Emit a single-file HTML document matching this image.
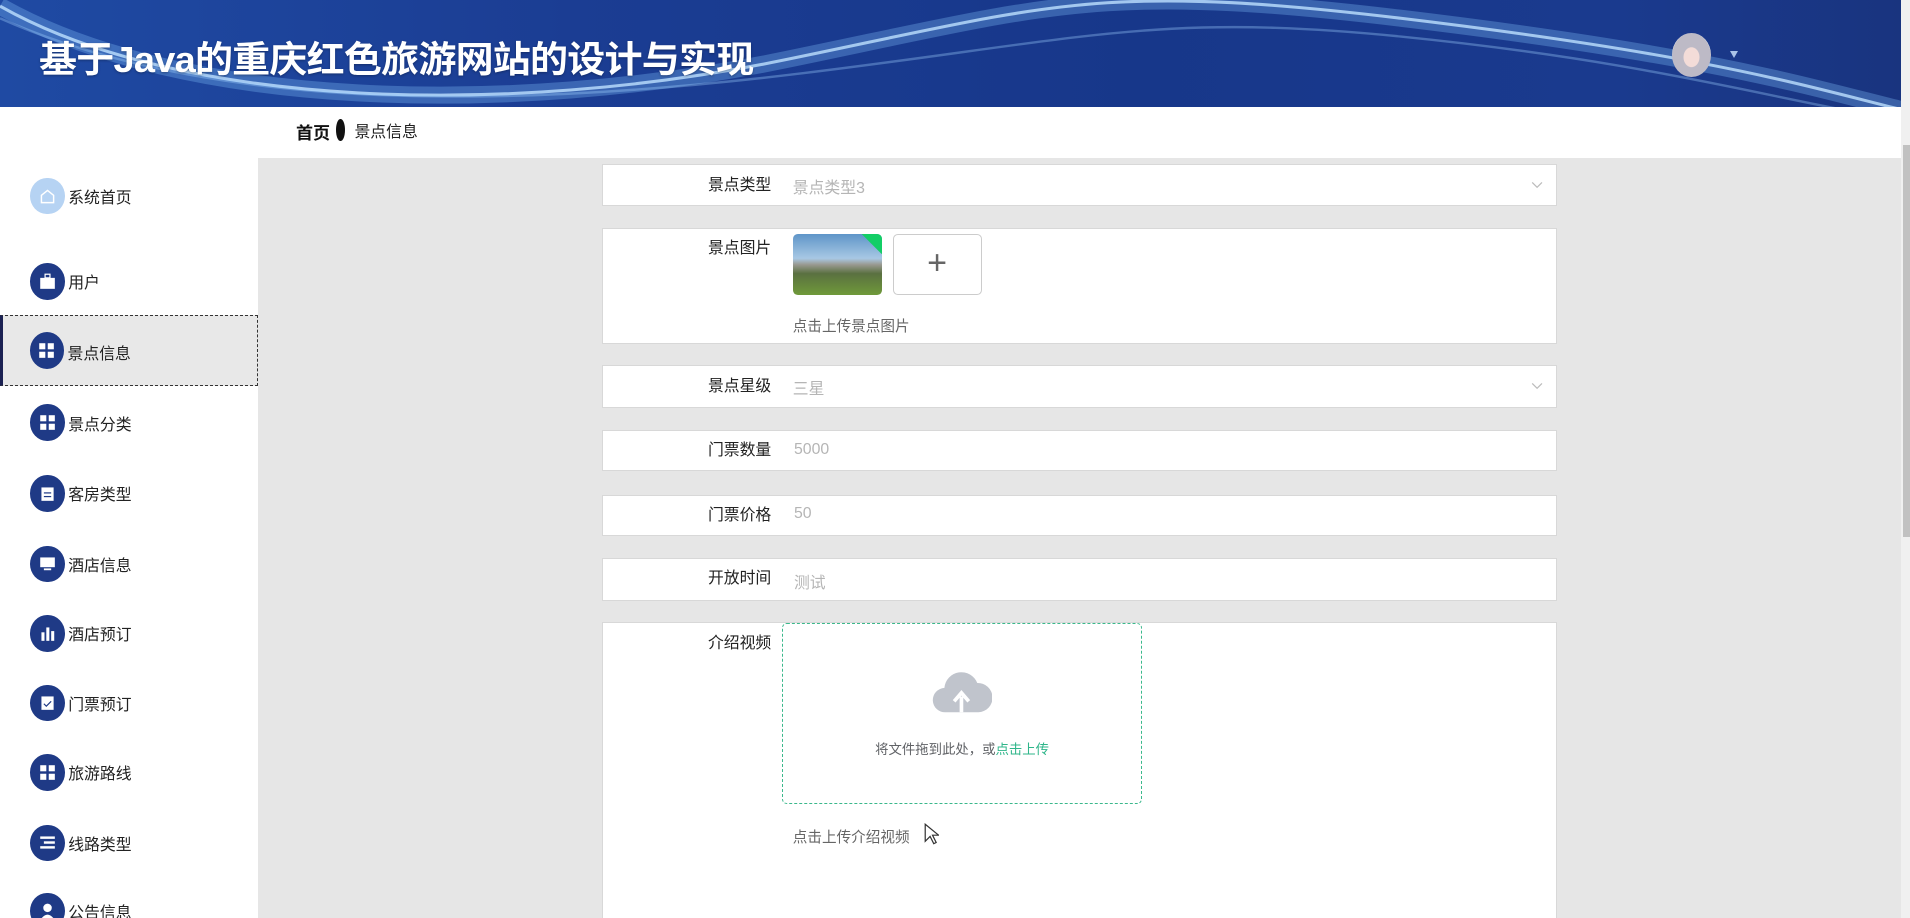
<!DOCTYPE html>
<html><head><meta charset="utf-8">
<style>
html{zoom:1.21811;background:#e6e6e6;overflow:hidden;height:754px}
*{box-sizing:border-box;margin:0;padding:0}
body{width:1568px;height:754px;overflow:hidden;position:relative;background:#e6e6e6;font-family:"Liberation Sans","Noto Sans CJK SC",sans-serif;font-size:13px;color:#333}
.hdr{position:absolute;left:0;top:0;width:1561px;height:88px;overflow:hidden;
background:linear-gradient(90deg,#1f4aa3 0%,#1b3d93 30%,#17378a 60%,#1a3a8e 85%,#19347f 100%)}
.hdr svg{position:absolute;left:0;top:0}
.title{position:absolute;left:32px;top:25px;color:#fff;font-size:30px;font-weight:bold;letter-spacing:-0.6px;text-shadow:0 1px 2px rgba(0,0,0,.3);transform:scaleX(1.04);transform-origin:left}
.av{position:absolute;left:1373px;top:27px;width:32px;height:36px;border-radius:50%;background:radial-gradient(ellipse at 50% 55%,#f3dcd8 0 28%,#bdbac6 30% 70%,#eee 72%)}
.caret{position:absolute;left:1420px;top:42px;width:0;height:0;border-left:4px solid transparent;border-right:4px solid transparent;border-top:6px solid #aac3e8}
.sb{position:absolute;left:1561px;top:0;width:7px;height:754px;background:#f0f0f0}
.sb i{position:absolute;left:1px;top:119px;width:6px;height:322px;background:#c1c1c1}
.side{position:absolute;left:0;top:88px;width:212px;height:666px;background:#fff;overflow:hidden}
.it{position:absolute;left:0;width:212px;height:58px}
.it .c{position:absolute;left:25px;top:14px;width:28px;height:30px;border-radius:50%;background:#1f3a86}
.it .c svg{position:absolute;left:7px;top:8px}
.it span{position:absolute;left:56px;top:20px;font-size:13px;color:#222}
.sel{background:#e8e8e8;border:1px dashed #333;border-left:3px solid #1b2152}
.bc{position:absolute;left:212px;top:88px;width:1349px;height:42px;background:#fff}
.row{position:absolute;left:494px;width:784px;background:#fff;border:1px solid #d8d8d8}
.lab{position:absolute;right:644px;top:5px;font-size:13px;color:#222}
.val{position:absolute;left:156px;top:8px;font-size:13px;color:#b5b5b5}
.arr{position:absolute;right:10px;top:12px}
</style></head><body>
<div class="hdr">
<svg width="1561" height="88">
<path d="M0 5 C150 90 420 95 640 50 S900 -15 1150 15 S1480 70 1561 90" stroke="rgba(120,180,240,.35)" stroke-width="14" fill="none"/>
<path d="M0 5 C150 90 420 95 640 50 S900 -15 1150 15 S1480 70 1561 90" stroke="rgba(190,225,255,.8)" stroke-width="2.5" fill="none"/>
<path d="M0 15 C180 95 430 88 660 60 S950 10 1150 30 S1450 80 1540 95" stroke="rgba(160,210,255,.35)" stroke-width="2" fill="none"/>
</svg>
<div class="title">基于Java的重庆红色旅游网站的设计与实现</div>
<div class="av"></div><div class="caret"></div>
</div>
<div class="sb"><i></i></div>
<div class="side">
<div class="it" style="top:44px"><div class="c" style="background:#b6d3f3"><svg width="14" height="14" viewBox="0 0 14 14"><path d="M2 6L7 2l5 4v6H2z" fill="none" stroke="#fff" stroke-width="1.2"/></svg></div><span>系统首页</span></div>
<div class="it" style="top:114px"><div class="c"><svg width="14" height="14"><rect x="1" y="4" width="12" height="9" fill="#fff"/><rect x="5" y="1" width="4" height="3" fill="none" stroke="#fff"/></svg></div><span>用户</span></div>
<div class="it sel" style="top:171px"><div class="c" style="left:22px;top:13px"><svg width="14" height="14"><rect x="1" y="1" width="5" height="5" fill="#fff"/><rect x="8" y="1" width="5" height="5" fill="#fff"/><rect x="1" y="8" width="5" height="5" fill="#fff"/><rect x="8" y="8" width="5" height="5" fill="#fff"/></svg></div><span style="left:53px;top:20px">景点信息</span></div>
<div class="it" style="top:230px"><div class="c"><svg width="14" height="14"><rect x="1" y="1" width="5" height="5" fill="#fff"/><rect x="8" y="1" width="5" height="5" fill="#fff"/><rect x="1" y="8" width="5" height="5" fill="#fff"/><rect x="8" y="8" width="5" height="5" fill="#fff"/></svg></div><span>景点分类</span></div>
<div class="it" style="top:288px"><div class="c"><svg width="14" height="14"><rect x="2" y="2" width="10" height="11" fill="#fff"/><rect x="4" y="6" width="6" height="1" fill="#1f3a86"/><rect x="4" y="9" width="6" height="1" fill="#1f3a86"/></svg></div><span>客房类型</span></div>
<div class="it" style="top:346px"><div class="c"><svg width="14" height="14"><rect x="1" y="2" width="12" height="8" fill="#fff"/><rect x="4" y="11" width="6" height="1.5" fill="#fff"/></svg></div><span>酒店信息</span></div>
<div class="it" style="top:403px"><div class="c"><svg width="14" height="14"><rect x="2" y="6" width="2.5" height="7" fill="#fff"/><rect x="6" y="2" width="2.5" height="11" fill="#fff"/><rect x="10" y="5" width="2.5" height="8" fill="#fff"/></svg></div><span>酒店预订</span></div>
<div class="it" style="top:460px"><div class="c"><svg width="14" height="14"><rect x="2" y="2" width="10" height="11" fill="#fff"/><path d="M4 8l2 2 4-4" stroke="#1f3a86" fill="none"/></svg></div><span>门票预订</span></div>
<div class="it" style="top:517px"><div class="c"><svg width="14" height="14"><rect x="1" y="1" width="5" height="5" fill="#fff"/><rect x="8" y="1" width="5" height="5" fill="#fff"/><rect x="1" y="8" width="5" height="5" fill="#fff"/><rect x="8" y="8" width="5" height="5" fill="#fff"/></svg></div><span>旅游路线</span></div>
<div class="it" style="top:575px"><div class="c"><svg width="14" height="14"><rect x="1" y="2" width="12" height="2" fill="#fff"/><rect x="4" y="6" width="9" height="2" fill="#fff"/><rect x="1" y="10" width="12" height="2" fill="#fff"/></svg></div><span>线路类型</span></div>
<div class="it" style="top:631px"><div class="c"><svg width="14" height="14"><circle cx="7" cy="4" r="3.5" fill="#fff"/><path d="M1 14 Q7 5 13 14z" fill="#fff"/></svg></div><span>公告信息</span></div>
</div>
<div class="bc"><b style="position:absolute;left:31px;top:10px;font-size:14px;color:#111">首页</b><i style="position:absolute;left:64px;top:10px;width:7px;height:18px;border-radius:50%;background:#111"></i><span style="position:absolute;left:79px;top:10px;font-size:13px;color:#222">景点信息</span></div>

<div class="row" style="top:135px;height:34px"><div class="lab">景点类型</div><div class="val">景点类型3</div><svg class="arr" width="10" height="8"><path d="M1 2l4 4 4-4" stroke="#bbb" fill="none"/></svg></div>
<div class="row" style="top:187px;height:95px"><div class="lab">景点图片</div>
<div style="position:absolute;left:156px;top:4px;width:73px;height:50px;border-radius:4px;overflow:hidden;background:linear-gradient(180deg,#5f95c8 0%,#a8c8e4 40%,#9a9a92 50%,#5a7040 65%,#6f9a3a 100%)"><i style="position:absolute;right:-12px;top:-12px;width:24px;height:24px;background:#13ce66;transform:rotate(45deg)"></i></div>
<div style="position:absolute;left:238px;top:4px;width:73px;height:50px;border:1px solid #ccc;border-radius:4px;text-align:center;line-height:46px;font-size:28px;color:#666;font-weight:300">+</div>
<div style="position:absolute;left:156px;top:71px;font-size:12px;color:#666">点击上传景点图片</div></div>
<div class="row" style="top:300px;height:35px"><div class="lab">景点星级</div><div class="val">三星</div><svg class="arr" width="10" height="8"><path d="M1 2l4 4 4-4" stroke="#bbb" fill="none"/></svg></div>
<div class="row" style="top:353px;height:34px"><div class="lab">门票数量</div><div class="val" style="left:157px">5000</div></div>
<div class="row" style="top:406px;height:34px"><div class="lab">门票价格</div><div class="val" style="left:157px">50</div></div>
<div class="row" style="top:458px;height:35px"><div class="lab">开放时间</div><div class="val" style="left:157px;top:9px">测试</div></div>
<div class="row" style="top:511px;height:243px;border-bottom:none"><div class="lab">介绍视频</div>
<div style="position:absolute;left:147px;top:0;width:296px;height:148px;border:1px dashed #3bb88c;border-radius:4px">
<svg style="position:absolute;left:122px;top:34px" width="50" height="40" viewBox="0 0 50 40"><path d="M12 38 A10 10 0 0 1 11 18 A14 14 0 0 1 38 14 A12 12 0 0 1 39 38z" fill="#c0c4cc"/><path d="M25 38V25M19 29l6-7 6 7" stroke="#fff" stroke-width="3" fill="none"/></svg>
<div style="position:absolute;left:0;width:100%;top:93px;text-align:center;font-size:11px;color:#606266">将文件拖到此处，或<span style="color:#2fb68a">点击上传</span></div></div>
<div style="position:absolute;left:156px;top:166px;font-size:12px;color:#666">点击上传介绍视频</div>
<svg style="position:absolute;left:264px;top:164px" width="12" height="18"><path d="M1 1v14l4-4 3 6 2-1-3-6h5z" fill="#fff" stroke="#333"/></svg>
</div>
</body></html>
